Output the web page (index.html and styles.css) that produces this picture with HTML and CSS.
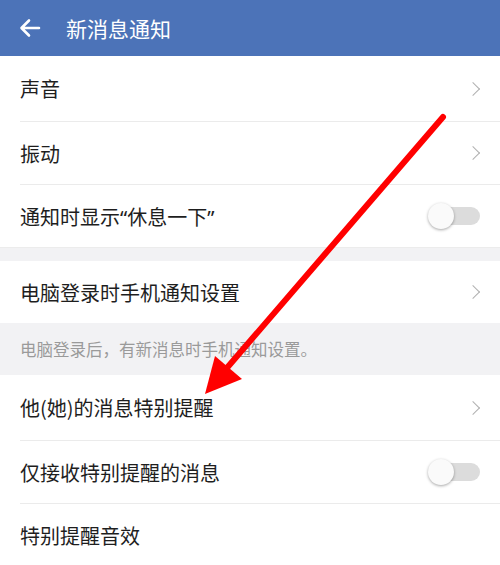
FILE: index.html
```html
<!DOCTYPE html>
<html lang="zh-CN">
<head>
  <meta charset="UTF-8" />
  <meta name="viewport" content="width=device-width, initial-scale=1" />
  <title>新消息通知</title>
  <link rel="stylesheet" href="styles.css">
</head>
<body>
  <div class="page">
    <header class="topbar">
      <svg class="back" width="22" height="20" viewBox="0 0 22 20">
        <path d="M20 10H3M10 2.5L2.5 10L10 17.5" fill="none" stroke="#fff" stroke-width="2.6" stroke-linecap="round" stroke-linejoin="round"/>
      </svg>
      <span class="title">新消息通知</span>
    </header>

    <div class="group">
      <div class="row row-tall">
        <span class="label">声音</span>
        <span class="chevron"></span>
      </div>
      <div class="row">
        <span class="label">振动</span>
        <span class="chevron"></span>
      </div>
      <div class="row">
        <span class="label">通知时显示<span class="quote">“</span>休息一下<span class="quote">”</span></span>
        <span class="switch"><span class="knob"></span></span>
      </div>
    </div>

    <div class="gap"></div>

    <div class="group">
      <div class="row">
        <span class="label">电脑登录时手机通知设置</span>
        <span class="chevron"></span>
      </div>
    </div>
    <div class="note">电脑登录后，有新消息时手机通知设置。</div>

    <div class="group">
      <div class="row row-tall">
        <span class="label">他(她)的消息特别提醒</span>
        <span class="chevron"></span>
      </div>
      <div class="row">
        <span class="label">仅接收特别提醒的消息</span>
        <span class="switch"><span class="knob"></span></span>
      </div>
      <div class="row">
        <span class="label">特别提醒音效</span>
      </div>
    </div>

    <!-- annotation arrow drawn over the screen -->
    <svg class="arrow" width="500" height="565" viewBox="0 0 500 565">
      <line x1="443" y1="117" x2="226" y2="369" stroke="#ff0000" stroke-width="6" stroke-linecap="round"/>
      <polygon points="205,394 215,356 242,379" fill="#ff0000"/>
    </svg>
  </div>
</body>
</html>
```

FILE: styles.css
```css
body {
  margin: 0;
  font-family: "Noto Sans CJK SC", "Noto Sans", sans-serif;
  background: #fff;
}

.page {
  position: relative;
  width: 500px;
  height: 565px;
  overflow: hidden;
}

.topbar {
  height: 56px;
  background: #4c73b8;
  display: flex;
  align-items: center;
  padding-left: 19px;
  box-sizing: border-box;
  color: #fff;
}

.back {
  margin-right: 25px;
}

.title {
  font-size: 21px;
}

.group {
  background: #fff;
}

.row {
  height: 62px;
  margin-left: 20px;
  padding-right: 18px;
  display: flex;
  align-items: center;
  justify-content: space-between;
  border-bottom: 1px solid #ebebeb;
}

.row-tall {
  height: 65px;
}

.row:last-child {
  border-bottom: none;
}

.label {
  font-size: 20px;
  color: #1e1e1e;
}

.quote {
  font-family: "Noto Sans", sans-serif;
}

.chevron {
  width: 9px;
  height: 9px;
  border-top: 1.6px solid #b0b0b0;
  border-right: 1.6px solid #b0b0b0;
  transform: rotate(45deg);
  margin-right: 4px;
}

.gap {
  height: 14px;
  background: #f2f2f4;
  border-top: 1px solid #ececec;
  box-sizing: border-box;
}

.note {
  height: 52px;
  background: #f2f2f4;
  padding-left: 20px;
  display: flex;
  align-items: center;
  font-size: 16.5px;
  color: #9a9a9a;
}

.switch {
  position: relative;
  width: 46px;
  height: 18px;
  border-radius: 9px;
  background: #dcdcdc;
  margin-right: 2px;
}

.knob {
  position: absolute;
  left: -6px;
  top: -4px;
  width: 26px;
  height: 26px;
  border-radius: 50%;
  background: #fafafa;
  box-shadow: 0 1px 3px rgba(0,0,0,0.35);
}

.arrow {
  position: absolute;
  left: 0;
  top: 0;
  pointer-events: none;
}
```
